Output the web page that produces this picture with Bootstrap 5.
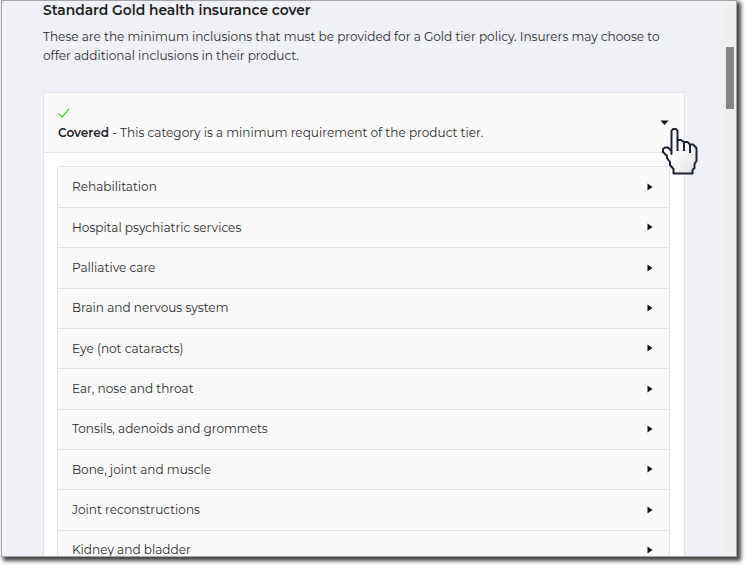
<!DOCTYPE html>
<html lang="en">
<head>
<meta charset="utf-8">
<meta name="viewport" content="width=device-width, initial-scale=1">
<title>Standard Gold health insurance cover</title>
<link href="https://cdn.jsdelivr.net/npm/bootstrap@5.3.0/dist/css/bootstrap.min.css" rel="stylesheet">
<style>
body{width:745px;height:566px;font-family:Montserrat,Inter,sans-serif;font-size:12.09px;line-height:20px;color:#2b2b2b;background:#fff}
.window-frame{width:736px;height:557px;margin-left:1px;border:1px solid #a3a5a5;background:#f0f1f6;box-shadow:3px 3px 4px 1px #444}
.page-pane{width:721px;padding:0 38px 0 41px}
.page-title{font-size:13.83px;line-height:20px;font-weight:600;color:#1c1c1c;margin:-1px 0 7px}
.intro{line-height:19px;margin-bottom:27px;white-space:nowrap}
.panel{width:642px;border:1px solid #e2e3e6;border-radius:2px 2px 0 0;background:#fff}
.panel-top{height:60px;padding:15px 14px 0;background:#fafafa;border-bottom:1px solid #e2e3e4}
.panel-top b{font-weight:600;color:#222}
.panel-top svg{display:block}
.lead-line{padding-top:1px}
.panel-inner{padding:13px 14px 0 13px}
.cover-list{--bs-list-group-border-color:#e1e2e3;--bs-list-group-bg:#fafafa;--bs-list-group-color:#2b2b2b;--bs-list-group-border-radius:2px}
.cover-list .list-group-item{height:40.35px;padding:0 16px 0 14px}
.cover-list .list-group-item:first-child{height:42px}
.cover-list svg{margin-top:-1px}
.scroll-track{width:13px;background:#efefef;padding:46px 2px 0 3px}
.scroll-thumb{height:62px;background:#858585}
.down-caret{left:658px;top:119px}
.hand-cursor{left:659px;top:126px}
</style>
</head>
<body class="overflow-hidden position-relative">
<main class="window-frame d-flex overflow-hidden">
  <div class="page-pane">
    <h1 class="page-title">Standard Gold health insurance cover</h1>
    <p class="intro">These are the minimum inclusions that must be provided for a Gold tier policy. Insurers may choose to<br>offer additional inclusions in their product.</p>
    <section class="panel">
      <div class="panel-top">
        <svg width="12" height="14" viewBox="0 0 12 14" fill="none" stroke="#5fc832" stroke-width="1.3"><path d="M.5 5.4 4.2 9 11.2 .7"/></svg>
        <div class="lead-line"><b>Covered</b> - This category is a minimum requirement of the product tier.</div>
      </div>
      <div class="panel-inner">
        <ul class="list-group cover-list">
          <li class="list-group-item d-flex align-items-center justify-content-between"><span>Rehabilitation</span><svg width="6" height="8"><path d="M.5.5 5.5 4 .5 7.5Z" fill="#111"/></svg></li>
          <li class="list-group-item d-flex align-items-center justify-content-between"><span>Hospital psychiatric services</span><svg width="6" height="8"><path d="M.5.5 5.5 4 .5 7.5Z" fill="#111"/></svg></li>
          <li class="list-group-item d-flex align-items-center justify-content-between"><span>Palliative care</span><svg width="6" height="8"><path d="M.5.5 5.5 4 .5 7.5Z" fill="#111"/></svg></li>
          <li class="list-group-item d-flex align-items-center justify-content-between"><span>Brain and nervous system</span><svg width="6" height="8"><path d="M.5.5 5.5 4 .5 7.5Z" fill="#111"/></svg></li>
          <li class="list-group-item d-flex align-items-center justify-content-between"><span>Eye (not cataracts)</span><svg width="6" height="8"><path d="M.5.5 5.5 4 .5 7.5Z" fill="#111"/></svg></li>
          <li class="list-group-item d-flex align-items-center justify-content-between"><span>Ear, nose and throat</span><svg width="6" height="8"><path d="M.5.5 5.5 4 .5 7.5Z" fill="#111"/></svg></li>
          <li class="list-group-item d-flex align-items-center justify-content-between"><span>Tonsils, adenoids and grommets</span><svg width="6" height="8"><path d="M.5.5 5.5 4 .5 7.5Z" fill="#111"/></svg></li>
          <li class="list-group-item d-flex align-items-center justify-content-between"><span>Bone, joint and muscle</span><svg width="6" height="8"><path d="M.5.5 5.5 4 .5 7.5Z" fill="#111"/></svg></li>
          <li class="list-group-item d-flex align-items-center justify-content-between"><span>Joint reconstructions</span><svg width="6" height="8"><path d="M.5.5 5.5 4 .5 7.5Z" fill="#111"/></svg></li>
          <li class="list-group-item d-flex align-items-center justify-content-between"><span>Kidney and bladder</span><svg width="6" height="8"><path d="M.5.5 5.5 4 .5 7.5Z" fill="#111"/></svg></li>
        </ul>
      </div>
    </section>
  </div>
  <div class="scroll-track"><div class="scroll-thumb"></div></div>
</main>
<svg class="down-caret position-absolute" width="14" height="8"><path d="M2.500 1.500H10.500L6.500 6Z" fill="#111"/></svg>
<svg class="hand-cursor position-absolute" width="42" height="52" viewBox="0 0 42 52">
  <defs><linearGradient id="palm" x1="0" y1="0" x2="1" y2="1"><stop offset=".45" stop-color="#fff"/><stop offset="1" stop-color="#ddd"/></linearGradient></defs>
  <path d="M12.500 28V5L14 3H17L18.500 5V14H22L25 16H28.500L31 18.500H34L37.500 22V35L35.500 38V42L33.500 44V47.500H14.500V43L11 39V36L8 32V30L4 26V23L6 21.500H9L12.500 25Z" fill="url(#palm)" stroke="#1d2034" stroke-width="2" stroke-linejoin="round"/>
  <path d="M18.500 14V25M25 16V25M31 18.500V27" fill="none" stroke="#1d2034" stroke-width="2"/>
</svg>
<script src="https://cdn.jsdelivr.net/npm/bootstrap@5.3.0/dist/js/bootstrap.bundle.min.js"></script>
</body>
</html>
